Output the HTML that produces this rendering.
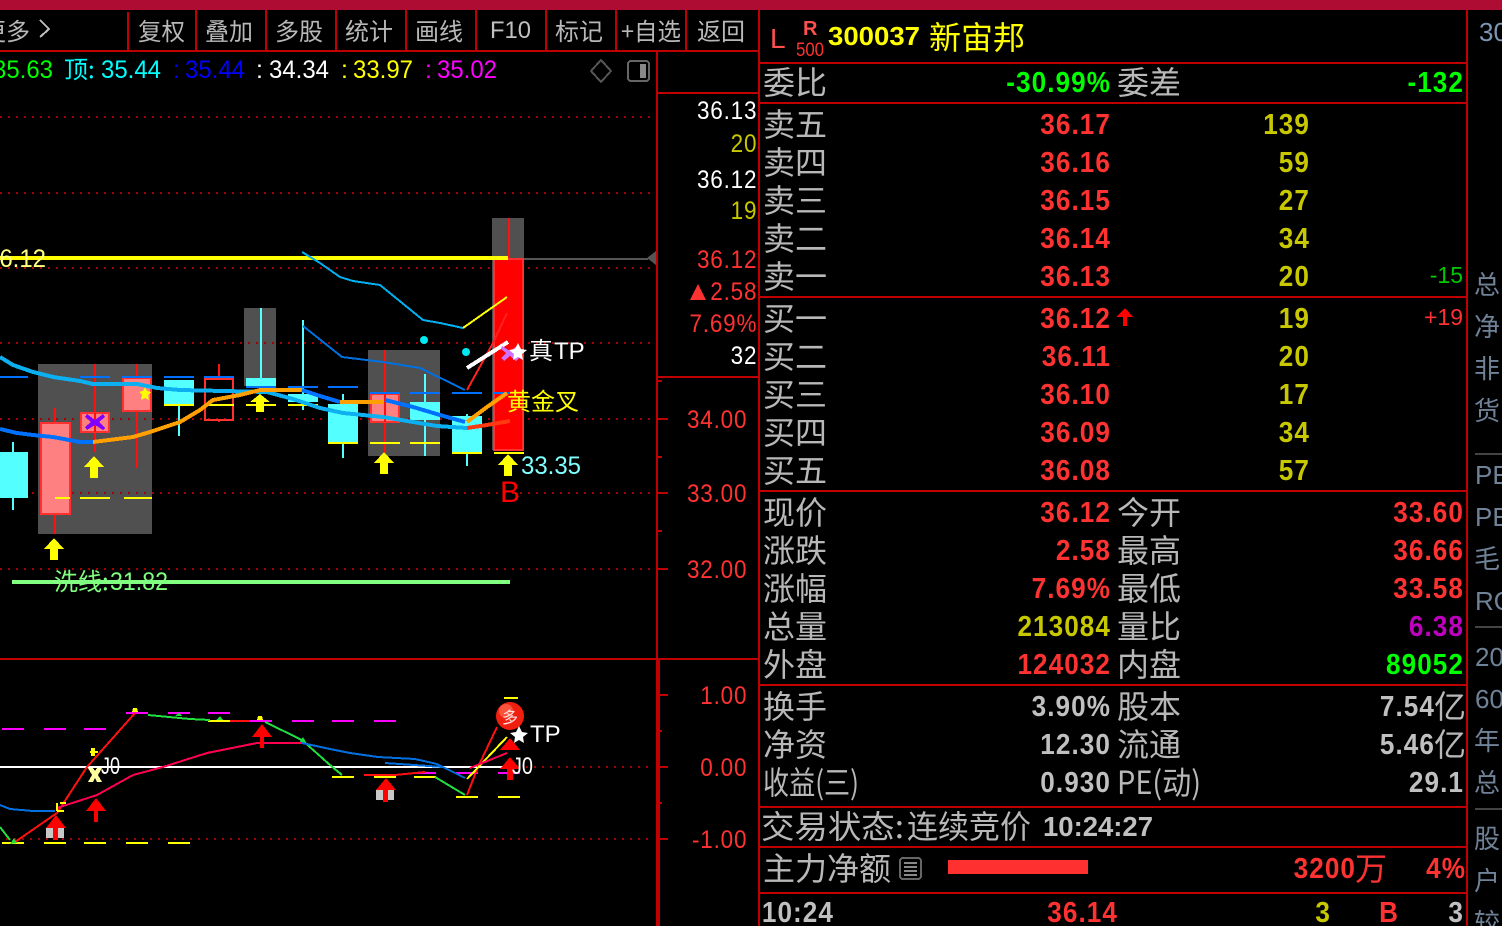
<!DOCTYPE html>
<html><head><meta charset="utf-8"><title>300037</title>
<style>
html,body{margin:0;padding:0;background:#000;width:1502px;height:926px;overflow:hidden}
svg{display:block}
text{font-family:"Liberation Sans",sans-serif;white-space:pre}
.c{font-family:"WenQuanYi Zen Hei","Noto Sans CJK SC",sans-serif;font-size:32px;fill:#b8b8b8;transform:translateY(1px)}
.t{font-family:"WenQuanYi Zen Hei","Noto Sans CJK SC",sans-serif;font-size:24px;fill:#b8b8b8}
.s{font-family:"WenQuanYi Zen Hei","Noto Sans CJK SC","Liberation Sans",sans-serif;font-size:26px;fill:#6f8298}
.v{font-size:29px;font-weight:700;text-anchor:end;letter-spacing:1.2px;transform-box:fill-box;transform-origin:100% 50%;transform:translateX(1px) scaleX(.9)}
.a{font-size:25px;text-anchor:end;letter-spacing:.9px;transform-box:fill-box;transform-origin:100% 50%;transform:translateX(.3px) scaleX(.9)}
.r{fill:#ff3232}.y{fill:#c8c800}.g{fill:#c0c0c0}.n{fill:#00ff00}.m{fill:#c000c0}
.dot{stroke:#a80000;stroke-width:2;stroke-dasharray:2 6;fill:none}
.ln{fill:none;stroke-linejoin:miter}
.pk{fill:#ff8080;stroke:#ff3030;stroke-width:2}
.cy{fill:#54ffff}
.wc{stroke:#54ffff;stroke-width:2}
.wr{stroke:#ff1010;stroke-width:2}
.bd{stroke:#0070ff;stroke-width:2}
.yd{stroke:#ffff00;stroke-width:2}
.md{stroke:#ff00ff;stroke-width:2}
</style></head>
<body>
<svg width="1502" height="926" viewBox="0 0 1502 926" xmlns="http://www.w3.org/2000/svg">
<rect width="1502" height="926" fill="#000"/>
<g shape-rendering="crispEdges">
<rect width="1502" height="10" fill="#ae0c33"/>

<!-- frame lines -->
<g fill="#c00000">
<rect x="0" y="50" width="758" height="2"/>
<rect x="127" y="12" width="2" height="38"/><rect x="195" y="10" width="2" height="40"/><rect x="265" y="10" width="2" height="40"/><rect x="335" y="10" width="2" height="40"/><rect x="405" y="10" width="2" height="40"/><rect x="475" y="10" width="2" height="40"/><rect x="545" y="10" width="2" height="40"/><rect x="615" y="10" width="2" height="40"/><rect x="685" y="10" width="2" height="40"/>
<rect x="656" y="52" width="2" height="608"/>
<rect x="656" y="660" width="4" height="266"/>
<rect x="658" y="92" width="100" height="2"/>
<rect x="658" y="376" width="100" height="2"/>
<rect x="0" y="658" width="758" height="2"/>
<rect x="758" y="10" width="2" height="916"/>
<rect x="1466" y="10" width="2" height="916"/>
<rect x="760" y="62" width="706" height="2"/>
<rect x="760" y="102" width="706" height="2"/>
<rect x="760" y="296" width="706" height="2"/>
<rect x="760" y="490" width="706" height="2"/>
<rect x="760" y="684" width="706" height="2"/>
<rect x="760" y="806" width="706" height="2"/>
<rect x="760" y="846" width="706" height="2"/>
<rect x="760" y="892" width="706" height="2"/>
<!-- ticks -->
<rect x="658" y="418" width="10" height="2"/><rect x="658" y="492" width="10" height="2"/><rect x="658" y="568" width="10" height="2"/><rect x="658" y="380" width="4" height="2"/><rect x="658" y="456" width="4" height="2"/><rect x="658" y="530" width="4" height="2"/>
<rect x="660" y="694" width="8" height="2"/><rect x="660" y="766" width="8" height="2"/><rect x="660" y="838" width="8" height="2"/><rect x="660" y="730" width="2" height="2"/><rect x="660" y="802" width="2" height="2"/>
</g>

<!-- side column separators -->
<rect x="1475" y="453" width="27" height="2" fill="#444"/>
<rect x="1475" y="626" width="27" height="2" fill="#444"/>
<rect x="1475" y="808" width="27" height="2" fill="#444"/>

<!-- grey backgrounds -->
<g fill="#505050">
<rect x="38" y="364" width="114" height="170"/>
<rect x="244" y="308" width="32" height="78"/>
<rect x="368" y="350" width="72" height="106"/>
<rect x="492" y="218" width="32" height="232"/>
</g>

<!-- grid dots -->
<path class="dot" d="M0 117H650M0 193H650M0 268H650M0 343H650M0 419H650M0 493H650M0 569H650M6 839H650M510 767H650"/>

<!-- candles -->
<path class="wc" d="M13 442V452M13 498V510M179 405V436M261 308V378M303 320V410M343 394V404M343 444V458M425 374V456M467 414V416M467 454V466"/>
<path class="wr" d="M55 408V422M55 514V534M95 364V412M95 432V452M137 364V378M137 411V468M219 364V378M219 420V422M385 350V456M509 218V258"/>
<rect x="0" y="452" width="28" height="46" class="cy"/>
<rect x="41" y="423" width="29" height="91" class="pk"/>
<rect x="81" y="413" width="28" height="19" class="pk"/>
<rect x="123" y="378" width="28" height="33" class="pk"/>
<rect x="164" y="380" width="30" height="25" class="cy"/>
<rect x="205" y="379" width="28" height="41" fill="none" stroke="#ff3030" stroke-width="2"/>
<rect x="246" y="378" width="30" height="8" class="cy"/>
<rect x="288" y="394" width="30" height="8" class="cy"/>
<rect x="328" y="404" width="30" height="40" class="cy"/>
<rect x="371" y="394" width="28" height="28" class="pk"/>
<rect x="410" y="402" width="30" height="18" class="cy"/>
<rect x="452" y="416" width="30" height="38" class="cy"/>
<rect x="494" y="259" width="29" height="191" fill="#ff0000" stroke="#ff3030" stroke-width="2"/>
<path class="wr" d="M385 394V422M95 413V432"/>
<!-- dashes -->
<path class="bd" d="M0 377H28M80 377H110M122 377H152M164 377H194M204 377H234M246 387H276M288 387H318M328 387H358M370 393H400M410 393H440M452 393H482M494 393H510"/>
<path class="yd" d="M55 498H70M80 498H110M124 498H152M164 405H194M208 405H234M246 405H276M288 405H318M328 443H358M370 443H400M410 443H440M452 453H482M494 453H524"/>

<!-- price level lines -->
<rect x="0" y="256" width="508" height="4" fill="#ffff00"/>
<rect x="524" y="258" width="124" height="2" fill="#555"/>
<path d="M656 251V265L647 258Z" fill="#555"/>
<rect x="12" y="580" width="498" height="4" fill="#80ff80"/>

<!-- MA lines -->
<polyline class="ln" stroke="#0cb0f0" stroke-width="4" points="0,357 13,365 33,372 53,377 80,381 93,384 137,384 157,388 180,390 267,392 293,399 320,408 343,413 383,417 413,422 437,426 467,428"/>
<polyline class="ln" stroke="#ff3a10" stroke-width="4" points="467,428 487,425 510,421"/>
<polyline class="ln" stroke="#0070ff" stroke-width="4" points="0,429 17,433 33,435 53,437 80,442 93,442"/>
<polyline class="ln" stroke="#ffa000" stroke-width="4" points="93,442 133,437 150,432 180,422 200,410 213,400 240,395 260,390 302,390"/>
<polyline class="ln" stroke="#0070ff" stroke-width="4" points="302,390 320,396 340,402"/>
<polyline class="ln" stroke="#ffa000" stroke-width="4" points="340,402 384,402"/>
<polyline class="ln" stroke="#0070ff" stroke-width="4" points="385,400 413,407 440,415 465,422"/>
<polyline class="ln" stroke="#ffa000" stroke-width="4" points="467,422 487,407 507,393"/>
<polyline class="ln" stroke="#00b0f0" stroke-width="2" points="302,252 320,263 340,277 353,281 380,285 423,320 440,323 463,328"/>
<polyline class="ln" stroke="#ffff00" stroke-width="2" points="463,328 507,297"/>
<polyline class="ln" stroke="#0070e0" stroke-width="2" points="303,326 342,357 383,362 420,368 465,390"/>
<polyline class="ln" stroke="#ff2020" stroke-width="2" points="467,390 493,343 507,313"/>
<polyline class="ln" stroke="#ffffff" stroke-width="4" points="467,368 508,342"/>

<!-- yellow arrows -->
<g fill="#ffff00">
<path d="M54 538L64 549H58V560H50V549H44Z"/>
<path d="M94 456L104 467H98V478H90V467H84Z"/>
<path d="M260 394L270 402H264V412H256V402H250Z"/>
<path d="M384 452L394 463H388V474H380V463H374Z"/>
<path d="M508 454L518 465H512V476H504V465H498Z"/>
<path d="M145 387L147 391L151 392L148 395L149 400L145 398L141 400L142 395L139 392L143 391Z"/>
</g>
<!-- purple X -->
<path d="M87 414L95 420L103 414L105 417L99 422L105 428L103 430L95 425L87 430L85 427L91 422L85 417Z" fill="#8000ff"/>
<path d="M502 346L510 351L517 346L519 349L514 353L519 358L516 361L510 356L504 361L501 358L506 353L501 349Z" fill="#d070ff"/>

<!-- lower panel -->
<rect x="0" y="766" width="507" height="2" fill="#fff"/>
<path class="md" d="M2 729H24M44 729H66M84 729H106M126 713H148M168 713H190M208 713H230M250 721H272M292 721H314M332 721H354M374 721H396M414 773H436M456 773H478M498 773H520"/>
<path class="yd" d="M2 843H24M44 843H66M84 843H106M126 843H148M168 843H190M208 721H230M332 777H354M374 777H396M414 777H436M456 797H478M498 797H520M504 698H518"/>
<polyline class="ln" stroke="#ff1010" stroke-width="2" points="15,842 57,813 87,767 135,713"/>
<polyline class="ln" stroke="#20e040" stroke-width="2" points="148,715 190,719 210,720"/>
<polyline class="ln" stroke="#ff1010" stroke-width="2" points="230,721 250,721"/>
<polyline class="ln" stroke="#20e040" stroke-width="2" points="265,722 302,740 330,765 342,775"/>
<polyline class="ln" stroke="#ff1010" stroke-width="2" points="364,775 395,775 425,772"/>
<polyline class="ln" stroke="#20e040" stroke-width="2" points="435,777 465,795"/>
<polyline class="ln" stroke="#ff1010" stroke-width="2" points="467,795 478,767 497,727"/>
<polyline class="ln" stroke="#ffff00" stroke-width="2" points="467,779 507,737"/>
<polyline class="ln" stroke="#ff0050" stroke-width="2" points="57,808 97,795 133,775 163,767 207,753 257,743 302,743"/>
<polyline class="ln" stroke="#0070e0" stroke-width="2" points="302,743 330,749 350,753 378,757 415,759 437,764 465,778"/>
<polyline class="ln" stroke="#0070e0" stroke-width="2" points="385,763 443,767"/>
<polyline class="ln" stroke="#ff0050" stroke-width="2" points="470,768 507,753"/>
<polyline class="ln" stroke="#0070e0" stroke-width="2" points="0,805 10,809 33,811 55,811"/>
<polyline class="ln" stroke="#20e040" stroke-width="2" points="0,827 10,840"/>
<path class="yd" d="M60 803H66M57 803V811M57 811H64" fill="none"/>
<!-- small markers -->
<path d="M91 748h4v3h3v2h-3v3h-4v-3h-1v-2h1Z M133 708h4l1 4h-6Z M258 716h4l1 4h-6Z" fill="#ffff00"/>
<path d="M10 844l4-6 3 5Z M175 716l4-3 3 3Z M216 720l4-4 3 4Z M300 742l3-5 3 5Z" fill="#20e040"/>
<!-- red arrows -->
<g fill="#ff0000">
<path d="M262 724L272 737H264V748H260V737H252Z"/>
<path d="M96 798L106 811H98V822H94V811H86Z"/>
<path d="M510 738L520 750H500Z"/>
<path d="M510 757L520 769H513V780H507V769H500Z"/>
</g>
<rect x="46" y="828" width="18" height="10" fill="#c8c8c8"/>
<path d="M56 815L66 828H46Z M53 828h5v12h-5Z" fill="#ff0000"/>
<rect x="376" y="790" width="18" height="10" fill="#c8c8c8"/>
<path d="M386 778L396 790H376Z M383 790h5v12h-5Z" fill="#ff0000"/>
<!-- pale X -->
<path d="M88 768H93L95 771L97 768H102L98 775L102 782H97L95 778L93 782H88L92 775Z" fill="#ffffa0"/>

<!-- icons top -->
<path d="M601 60L611 71L601 82L591 71Z" fill="none" stroke="#555" stroke-width="2"/>
<rect x="628" y="61" width="21" height="20" rx="3" fill="none" stroke="#666" stroke-width="2"/>
<rect x="640" y="64" width="6" height="14" fill="#888"/>

<!-- toolbar chevron and axis triangle -->
<path d="M40 20L49 29L40 37" fill="none" stroke="#c0c0c0" stroke-width="2"/>
<path d="M698 284L706 300H690Z" fill="#ff3232"/>

<!-- arrow next to bid -->
<path d="M1125 308L1133 317H1127V326H1123V317H1116Z" fill="#ff0000"/>
<!-- main force -->
<rect x="948" y="860" width="140" height="14" fill="#ff3030"/>
<rect x="900" y="858" width="21" height="21" rx="3" fill="none" stroke="#666" stroke-width="2"/>
<path d="M904 863H917M904 867H917M904 871H917M904 875H917" stroke="#888" stroke-width="2"/>
</g>

<!-- circle + star -->
<circle cx="510" cy="716" r="14" fill="#f02010"/>
<circle cx="506" cy="711" r="7" fill="#ff6a50" opacity=".7"/>
<path d="M519 726l3 6 6 1-5 4 1 6-5-3-5 3 1-6-5-4 6-1Z" fill="#fff"/>
<path d="M518 343l3 6 6 1-5 4 1 6-5-3-5 3 1-6-5-4 6-1Z" fill="#fff"/>
<circle cx="424" cy="340" r="4" fill="#00e8f0"/>
<circle cx="466" cy="352" r="4" fill="#00e8f0"/>

<!-- toolbar text -->
<g class="t">
<text class="t" x="-18" y="40">更多</text>
<text class="t" x="138" y="40" textLength="47" lengthAdjust="spacingAndGlyphs">复权</text>
<text class="t" x="205" y="40" textLength="48" lengthAdjust="spacingAndGlyphs">叠加</text>
<text class="t" x="275" y="40" textLength="48" lengthAdjust="spacingAndGlyphs">多股</text>
<text class="t" x="345" y="40" textLength="48" lengthAdjust="spacingAndGlyphs">统计</text>
<text class="t" x="415" y="40" textLength="48" lengthAdjust="spacingAndGlyphs">画线</text>
<text x="490" y="38" style="font-size:24px;fill:#c0c0c0" textLength="41" lengthAdjust="spacingAndGlyphs">F10</text>
<text class="t" x="555" y="40" textLength="48" lengthAdjust="spacingAndGlyphs">标记</text>
<text class="t" x="621" y="40" textLength="60" lengthAdjust="spacingAndGlyphs">+自选</text>
<text class="t" x="697" y="40" textLength="48" lengthAdjust="spacingAndGlyphs">返回</text>
</g>

<!-- indicator line -->
<text x="-7" y="78" style="font-size:25px;fill:#00ff00" textLength="60" lengthAdjust="spacingAndGlyphs">35.63</text>
<text class="t" x="64" y="78" style="fill:#00ffff">顶:</text>
<text x="101" y="78" style="font-size:25px;fill:#00ffff" textLength="60" lengthAdjust="spacingAndGlyphs">35.44</text>
<text x="173" y="78" style="font-size:25px;fill:#0000ff">:</text>
<text x="185" y="78" style="font-size:25px;fill:#0000ff" textLength="60" lengthAdjust="spacingAndGlyphs">35.44</text>
<text x="256" y="78" style="font-size:25px;fill:#fff">:</text>
<text x="269" y="78" style="font-size:25px;fill:#fff" textLength="60" lengthAdjust="spacingAndGlyphs">34.34</text>
<text x="341" y="78" style="font-size:25px;fill:#ffff00">:</text>
<text x="353" y="78" style="font-size:25px;fill:#ffff00" textLength="60" lengthAdjust="spacingAndGlyphs">33.97</text>
<text x="425" y="78" style="font-size:25px;fill:#ff00ff">:</text>
<text x="437" y="78" style="font-size:25px;fill:#ff00ff" textLength="60" lengthAdjust="spacingAndGlyphs">35.02</text>

<!-- axis labels -->
<g>
<text class="a" x="757" y="119" style="fill:#fff">36.13</text>
<text class="a" x="757" y="152" style="fill:#c8c800">20</text>
<text class="a" x="757" y="188" style="fill:#fff">36.12</text>
<text class="a" x="757" y="219" style="fill:#c8c800">19</text>
<text class="a" x="757" y="268" style="fill:#ff3232">36.12</text>
<text class="a" x="757" y="300" style="fill:#ff3232">2.58</text>
<text class="a" x="757" y="332" style="fill:#ff3232">7.69%</text>
<text class="a" x="757" y="364" style="fill:#fff">32</text>
<text class="a" x="747" y="428" style="fill:#ff3232">34.00</text>
<text class="a" x="747" y="502" style="fill:#ff3232">33.00</text>
<text class="a" x="747" y="578" style="fill:#ff3232">32.00</text>
<text class="a" x="747" y="704" style="fill:#ff3232">1.00</text>
<text class="a" x="747" y="776" style="fill:#ff3232">0.00</text>
<text class="a" x="747" y="848" style="fill:#ff3232">-1.00</text>
</g>

<!-- chart text -->
<text x="-14" y="267" style="font-size:25px;fill:#ffff80" textLength="60" lengthAdjust="spacingAndGlyphs">36.12</text>
<text class="t" x="529" y="359" style="fill:#fff">真</text>
<text x="554" y="359" style="font-size:24px;fill:#fff">TP</text>
<text class="t" x="507" y="410" style="fill:#ffff00">黄金叉</text>
<text x="521" y="474" style="font-size:25px;fill:#80ffff" textLength="60" lengthAdjust="spacingAndGlyphs">33.35</text>
<text x="500" y="502" style="font-size:30px;fill:#ff0000">B</text>
<text class="t" x="54" y="590" style="fill:#80ff80">洗线:</text><text x="110" y="590" style="font-size:25px;fill:#80ff80" textLength="58" lengthAdjust="spacingAndGlyphs">31.82</text>
<text x="101" y="774" style="font-size:24px;fill:#fff" textLength="19" lengthAdjust="spacingAndGlyphs">J0</text>
<text x="512" y="774" style="font-size:24px;fill:#fff" textLength="21" lengthAdjust="spacingAndGlyphs">J0</text>
<text x="530" y="742" style="font-size:24px;fill:#fff">TP</text>
<text x="502" y="723" style="font-family:'WenQuanYi Zen Hei','Noto Sans CJK SC',sans-serif;font-size:16px;fill:#ffe0e0">多</text>

<!-- header -->
<text x="770" y="48" style="font-size:28px;fill:#ff5050">L</text>
<text x="803" y="35" style="font-size:20px;font-weight:700;fill:#ff5050">R</text>
<text x="796" y="56" style="font-size:19px;fill:#ff3232" textLength="28" lengthAdjust="spacingAndGlyphs">500</text>
<text x="828" y="45" style="font-size:26px;font-weight:700;fill:#ffff00" textLength="92" lengthAdjust="spacingAndGlyphs">300037</text>
<text class="c" x="929" y="48" style="fill:#ffff00">新宙邦</text>

<!-- 委比 -->
<text class="c" x="763" y="93">委比</text>
<text class="v n" x="1110" y="92">-30.99%</text>
<text class="c" x="1117" y="93">委差</text>
<text class="v n" x="1463" y="92">-132</text>

<!-- sell -->
<text class="c" x="763" y="135">卖五</text><text class="v r" x="1110" y="134">36.17</text><text class="v y" x="1309" y="134">139</text>
<text class="c" x="763" y="173">卖四</text><text class="v r" x="1110" y="172">36.16</text><text class="v y" x="1309" y="172">59</text>
<text class="c" x="763" y="211">卖三</text><text class="v r" x="1110" y="210">36.15</text><text class="v y" x="1309" y="210">27</text>
<text class="c" x="763" y="249">卖二</text><text class="v r" x="1110" y="248">36.14</text><text class="v y" x="1309" y="248">34</text>
<text class="c" x="763" y="287">卖一</text><text class="v r" x="1110" y="286">36.13</text><text class="v y" x="1309" y="286">20</text>
<text x="1463" y="283" style="font-size:23px;fill:#00c800;text-anchor:end">-15</text>

<!-- buy -->
<text class="c" x="763" y="329">买一</text><text class="v r" x="1110" y="328">36.12</text><text class="v y" x="1309" y="328">19</text>
<text x="1463" y="325" style="font-size:23px;fill:#ff3232;text-anchor:end">+19</text>
<text class="c" x="763" y="367">买二</text><text class="v r" x="1110" y="366">36.11</text><text class="v y" x="1309" y="366">20</text>
<text class="c" x="763" y="405">买三</text><text class="v r" x="1110" y="404">36.10</text><text class="v y" x="1309" y="404">17</text>
<text class="c" x="763" y="443">买四</text><text class="v r" x="1110" y="442">36.09</text><text class="v y" x="1309" y="442">34</text>
<text class="c" x="763" y="481">买五</text><text class="v r" x="1110" y="480">36.08</text><text class="v y" x="1309" y="480">57</text>

<!-- stats -->
<text class="c" x="763" y="523">现价</text><text class="v r" x="1110" y="522">36.12</text><text class="c" x="1117" y="523">今开</text><text class="v r" x="1463" y="522">33.60</text>
<text class="c" x="763" y="561">涨跌</text><text class="v r" x="1110" y="560">2.58</text><text class="c" x="1117" y="561">最高</text><text class="v r" x="1463" y="560">36.66</text>
<text class="c" x="763" y="599">涨幅</text><text class="v r" x="1110" y="598">7.69%</text><text class="c" x="1117" y="599">最低</text><text class="v r" x="1463" y="598">33.58</text>
<text class="c" x="763" y="637">总量</text><text class="v y" x="1110" y="636">213084</text><text class="c" x="1117" y="637">量比</text><text class="v m" x="1463" y="636">6.38</text>
<text class="c" x="763" y="675">外盘</text><text class="v r" x="1110" y="674">124032</text><text class="c" x="1117" y="675">内盘</text><text class="v n" x="1463" y="674">89052</text>

<text class="c" x="763" y="717">换手</text><text class="v g" x="1110" y="716">3.90%</text><text class="c" x="1117" y="717">股本</text><text class="v g" x="1434" y="716">7.54</text><text class="c" x="1434" y="717">亿</text>
<text class="c" x="763" y="755">净资</text><text class="v g" x="1110" y="754">12.30</text><text class="c" x="1117" y="755">流通</text><text class="v g" x="1434" y="754">5.46</text><text class="c" x="1434" y="755">亿</text>
<text class="c" x="763" y="793" textLength="96" lengthAdjust="spacingAndGlyphs">收益(三)</text><text class="v g" x="1110" y="792">0.930</text><text class="c" x="1117" y="793" textLength="84" lengthAdjust="spacingAndGlyphs">PE(动)</text><text class="v g" x="1463" y="792">29.1</text>

<text class="c" x="761" y="837" textLength="143" lengthAdjust="spacingAndGlyphs">交易状态:</text><text class="c" x="907" y="837" textLength="124" lengthAdjust="spacingAndGlyphs">连续竞价</text><text x="1043" y="836" style="font-size:28px;font-weight:700;fill:#c0c0c0" textLength="110" lengthAdjust="spacingAndGlyphs">10:24:27</text>

<text class="c" x="763" y="879">主力净额</text>
<text class="v r" x="1355" y="878">3200</text><text class="c" x="1355" y="879" style="fill:#ff3232">万</text>
<text class="v r" x="1465" y="878">4%</text>

<text class="v g" x="833" y="922">10:24</text>
<text class="v r" x="1117" y="922">36.14</text>
<text class="v y" x="1330" y="922">3</text>
<text class="v r" x="1398" y="922">B</text>
<text class="v g" x="1463" y="922">3</text>

<!-- side column (clipped) -->
<text x="1479" y="41" style="font-size:26px;fill:#7c96b4">30</text>
<text class="s" x="1474" y="294">总</text>
<text class="s" x="1474" y="336">净</text>
<text class="s" x="1474" y="378">非</text>
<text class="s" x="1474" y="420">货</text>
<text x="1475" y="484" style="font-size:26px;fill:#6f8298">PE</text>
<text x="1475" y="526" style="font-size:26px;fill:#6f8298">PE</text>
<text class="s" x="1474" y="568">毛</text>
<text x="1475" y="610" style="font-size:26px;fill:#6f8298">RO</text>
<text x="1475" y="666" style="font-size:26px;fill:#6f8298">20</text>
<text x="1475" y="708" style="font-size:26px;fill:#6f8298">60</text>
<text class="s" x="1474" y="750">年</text>
<text class="s" x="1474" y="792">总</text>
<text class="s" x="1474" y="848">股</text>
<text class="s" x="1474" y="890">户</text>
<text class="s" x="1474" y="932">较</text>
</svg>
</body></html>
